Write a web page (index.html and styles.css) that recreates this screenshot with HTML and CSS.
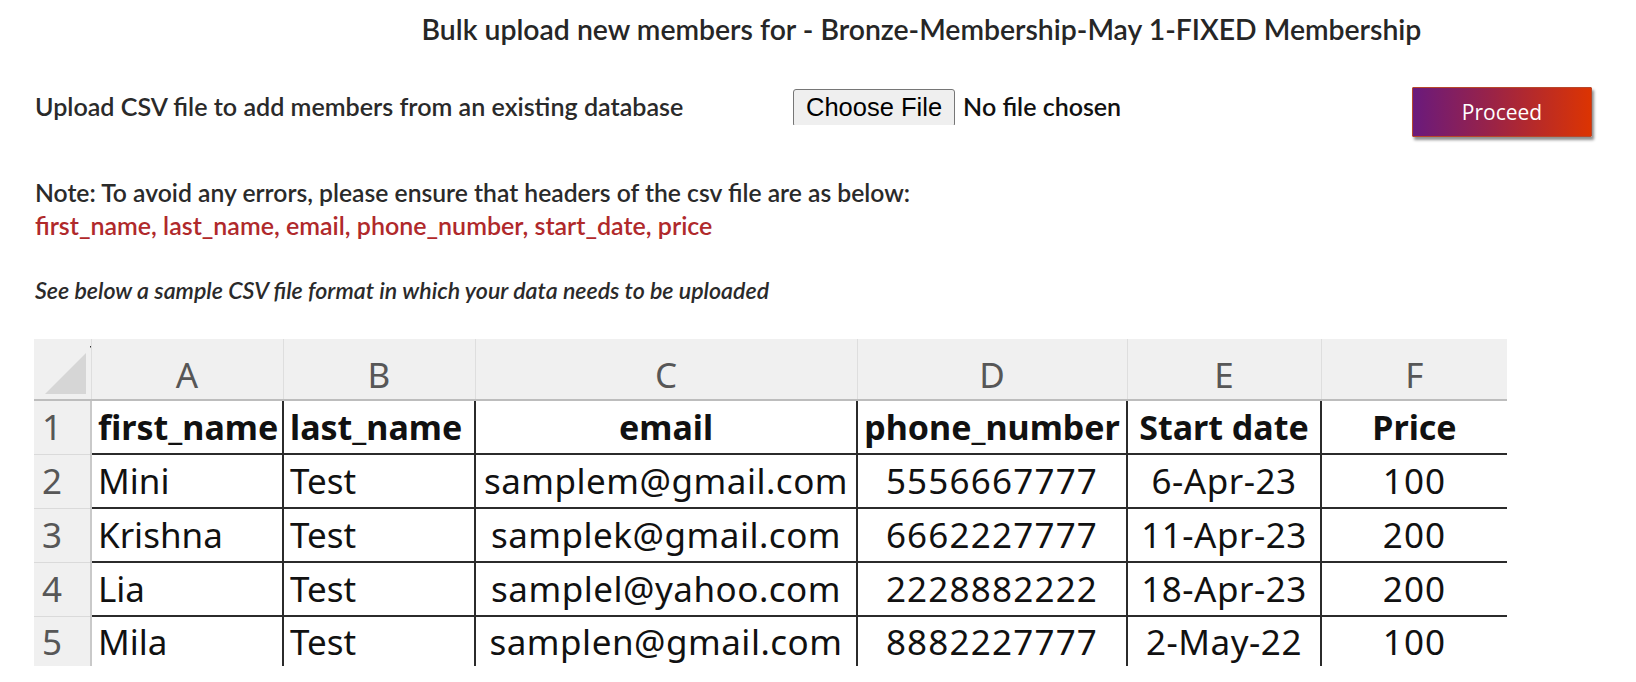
FILE: index.html
```html
<!DOCTYPE html>
<html lang="en">
<head>
<meta charset="utf-8">
<title>Bulk upload new members</title>
<link rel="stylesheet" href="styles.css">
</head>
<body>
<div class="page">
  <h1 class="title">Bulk upload new members for - Bronze-Membership-May 1-FIXED Membership</h1>

  <div class="upload-row">
    <label class="upload-label" for="csv">Upload CSV file to add members from an existing database</label>
    <input class="file" id="csv" type="file" accept=".csv">
    <button class="proceed" type="button">Proceed</button>
  </div>

  <div class="note">Note: To avoid any errors, please ensure that headers of the csv file are as below:</div>
  <div class="headers">first_name, last_name, email, phone_number, start_date, price</div>

  <div class="sample">See below a sample CSV file format in which your data needs to be uploaded</div>

  <div class="sheet">
    <table class="grid">
      <colgroup>
        <col class="c-rn">
        <col class="c-a">
        <col class="c-b">
        <col class="c-c">
        <col class="c-d">
        <col class="c-e">
        <col class="c-f">
      </colgroup>
      <thead>
        <tr>
          <th class="corner"><svg class="corner-tri" width="57" height="59" viewBox="0 0 57 59"><polygon points="52,14 11,55 52,55" fill="#d6d6d6"/><rect x="56" y="7" width="1.5" height="1.5" fill="#333"/></svg></th>
          <th class="col">A</th>
          <th class="col">B</th>
          <th class="col">C</th>
          <th class="col">D</th>
          <th class="col">E</th>
          <th class="col">F</th>
        </tr>
      </thead>
      <tbody>
        <tr class="hdr">
          <th class="rn">1</th>
          <td class="l">first_name</td>
          <td class="l">last_name</td>
          <td>email</td>
          <td>phone_number</td>
          <td>Start date</td>
          <td>Price</td>
        </tr>
        <tr>
          <th class="rn">2</th>
          <td class="l">Mini</td>
          <td class="l">Test</td>
          <td class="mail">samplem@gmail.com</td>
          <td class="num">5556667777</td>
          <td class="date">6-Apr-23</td>
          <td class="num">100</td>
        </tr>
        <tr>
          <th class="rn">3</th>
          <td class="l">Krishna</td>
          <td class="l">Test</td>
          <td class="mail">samplek@gmail.com</td>
          <td class="num">6662227777</td>
          <td class="date">11-Apr-23</td>
          <td class="num">200</td>
        </tr>
        <tr>
          <th class="rn">4</th>
          <td class="l">Lia</td>
          <td class="l">Test</td>
          <td class="mail">samplel@yahoo.com</td>
          <td class="num">2228882222</td>
          <td class="date">18-Apr-23</td>
          <td class="num">200</td>
        </tr>
        <tr class="last">
          <th class="rn">5</th>
          <td class="l">Mila</td>
          <td class="l">Test</td>
          <td class="mail">samplen@gmail.com</td>
          <td class="num">8882227777</td>
          <td class="date">2-May-22</td>
          <td class="num">100</td>
        </tr>
      </tbody>
    </table>
  </div>
</div>
</body>
</html>
```

FILE: styles.css
```css
* { box-sizing: border-box; }

html, body {
  margin: 0;
  padding: 0;
  background: #ffffff;
}

body {
  font-family: Lato, "Noto Sans", sans-serif;
  color: #2a2a2a;
}

.page {
  width: 1636px;
  height: 682px;
  padding: 9px 44px 0 35px;
  overflow: hidden;
}

.title {
  margin: 0;
  padding-left: 216px;
  text-align: center;
  font-size: 28.4px;
  line-height: 40px;
  font-weight: 600;
  color: #262626;
}

.upload-row {
  display: flex;
  align-items: flex-start;
  margin-top: 38px;
  height: 50px;
}

.upload-label {
  flex: none;
  width: 758px;
  font-size: 25.1px;
  line-height: 38px;
  font-weight: 600;
  color: #2a2a2a;
}

.file {
  flex: none;
  width: 380px;
  height: 38px;
  font-family: Lato, sans-serif;
  font-size: 25px;
  font-weight: 600;
  line-height: 38px;
  color: #111111;
}

.file::file-selector-button {
  height: 38px;
  margin-right: 8px;
  padding: 0 12px;
  font-family: "Liberation Sans", Arial, sans-serif;
  font-size: 25.5px;
  font-weight: 400;
  color: #000000;
  background: #efefef;
  border: 1px solid #767676;
  border-radius: 3px;
}

.proceed {
  flex: none;
  margin-left: auto;
  width: 180px;
  height: 50px;
  border: 1px solid #b8472a;
  border-radius: 1px;
  background: linear-gradient(to right, #6a1a7c 0%, #9b2346 45%, #dc3402 100%);
  color: #ffffff;
  font-family: "Open Sans", sans-serif;
  font-size: 21px;
  box-shadow: 2px 3px 3px rgba(0, 0, 0, 0.45);
  cursor: pointer;
}

.note {
  margin-top: 40px;
  font-size: 24.7px;
  line-height: 32px;
  font-weight: 600;
  color: #2a2a2a;
}

.headers {
  font-size: 25px;
  line-height: 32px;
  font-weight: 600;
  color: #b0292b;
}

.sample {
  margin-top: 35px;
  font-size: 23.2px;
  line-height: 28px;
  font-style: italic;
  font-weight: 600;
  color: #2a2a2a;
}

.sheet {
  margin-top: 35px;
  margin-left: -1px;
  width: 1473px;
}

.grid {
  width: 1473px;
  table-layout: fixed;
  border-collapse: collapse;
  font-family: "Noto Sans", "DejaVu Sans", sans-serif;
  color: #111111;
}

.c-rn { width: 57px; }
.c-a { width: 192px; }
.c-b { width: 192px; }
.c-c { width: 382px; }
.c-d { width: 270px; }
.c-e { width: 194px; }
.c-f { width: 186px; }

.grid thead th {
  height: 61px;
  padding: 16px 0 0 0;
  background: #f0f0f0;
  border-bottom: 2px solid #bdbdbd;
  vertical-align: top;
}

.grid .corner {
  padding: 0;
  vertical-align: top;
}

.corner-tri { display: block; }

.grid .col {
  font-size: 35px;
  line-height: 40px;
  font-weight: 400;
  color: #575757;
  text-align: center;
  border-left: 1px solid #dedede;
}

.grid .rn {
  height: 54px;
  padding: 0 0 0 8px;
  text-align: left;
  background: #f0f0f0;
  border-right: 2px solid #c9c9c9;
  border-bottom: 1px solid #dadada;
  font-size: 35px;
  line-height: 52px;
  font-weight: 400;
  color: #575757;
}

.grid td {
  height: 54px;
  padding: 0;
  font-size: 35px;
  line-height: 52px;
  text-align: center;
  white-space: nowrap;
  overflow: hidden;
  border-right: 2px solid #2b2b2b;
  border-bottom: 2px solid #2b2b2b;
}

.grid td:last-child { border-right: none; }

.grid td.l {
  text-align: left;
  padding-left: 6px;
}

.grid td.mail { letter-spacing: 0.5px; }
.grid td.num { letter-spacing: 1.2px; }
.grid td.date { letter-spacing: 0.5px; }

.grid .hdr td {
  font-size: 34px;
  font-weight: 700;
}

.grid .last td,
.grid .last th {
  height: 49px;
  line-height: 49px;
  border-bottom: none;
}
```
